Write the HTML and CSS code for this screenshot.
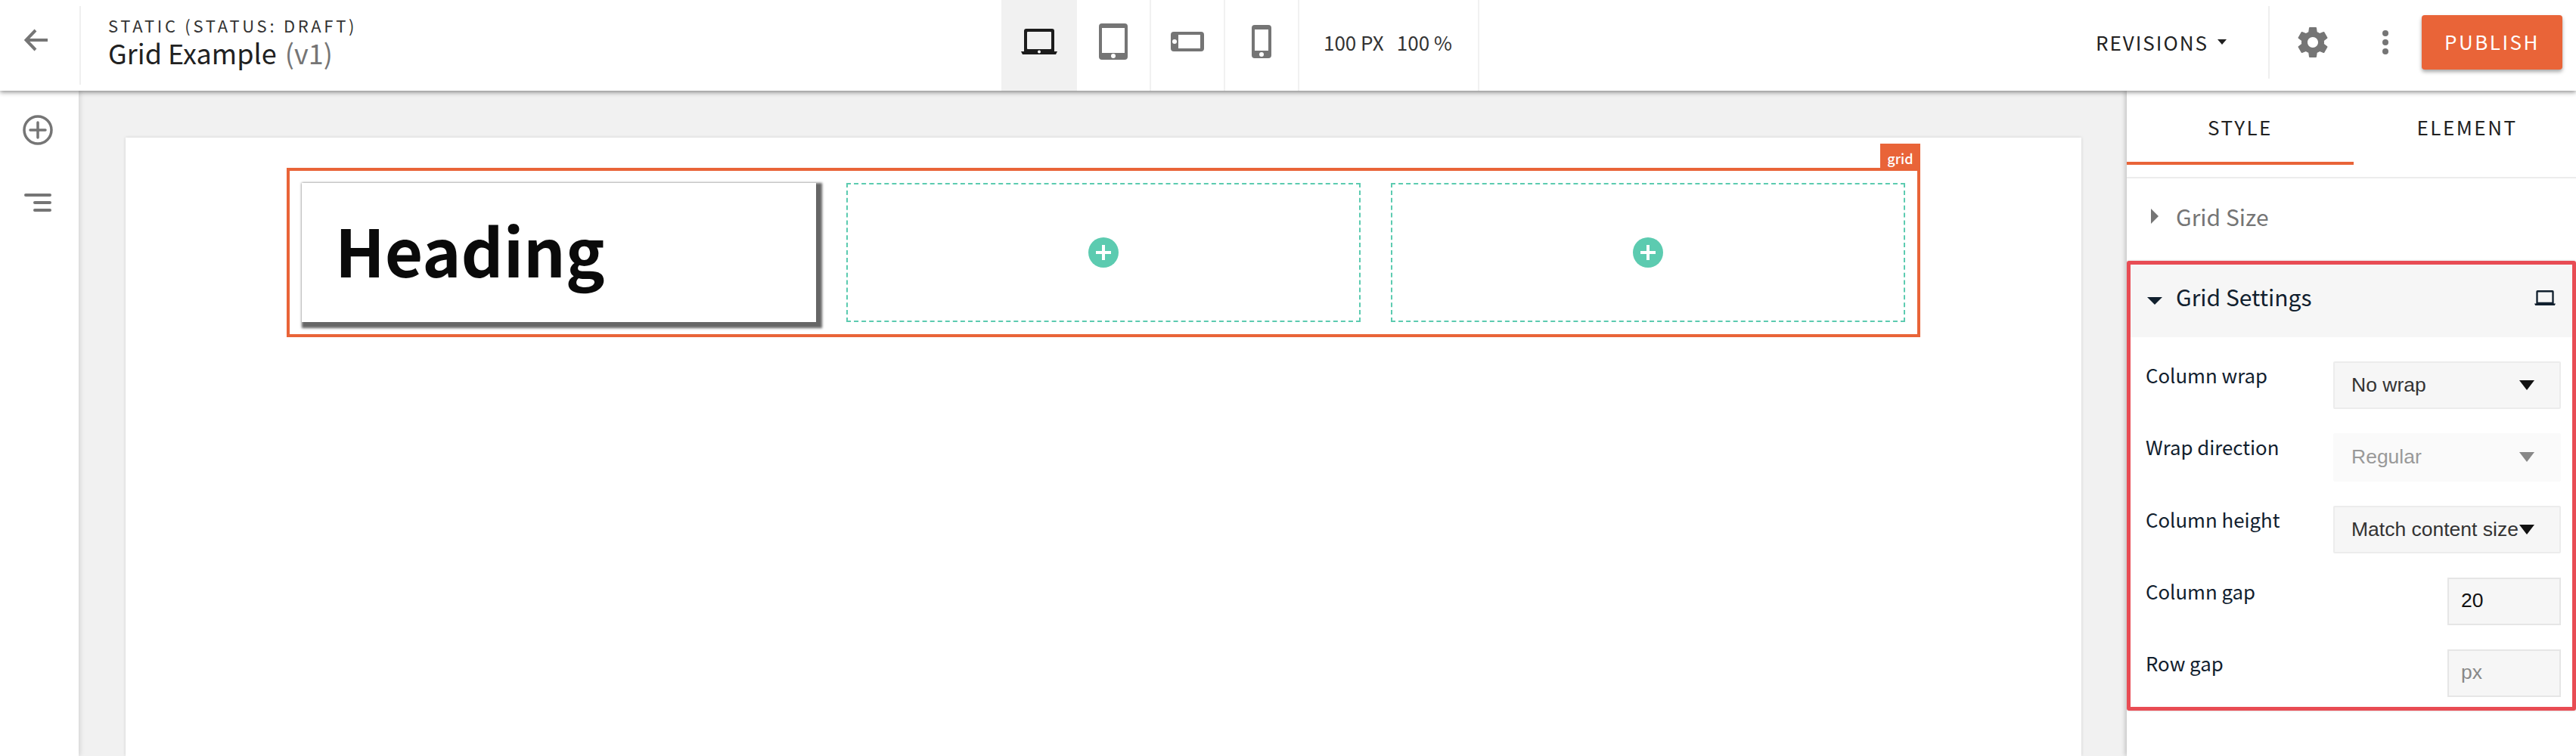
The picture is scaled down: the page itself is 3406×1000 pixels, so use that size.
FILE: index.html
```html
<!DOCTYPE html>
<html lang="en">
<head>
<meta charset="utf-8">
<title>Grid Example</title>
<link rel="stylesheet" href="styles.css">
</head>
<body>
<div class="app">
  <header class="topbar">
    <div class="back">
      <svg class="back-icon" viewBox="0 0 32 30"><path d="M31 15H3M15 2 2.500 15 15 28" fill="none" stroke="#757575" stroke-width="4"/></svg>
    </div>
    <div class="title-block">
      <div class="status">STATIC (STATUS: DRAFT)</div>
      <div class="title">Grid Example <span class="version">(v1)</span></div>
    </div>
    <div class="devices">
      <div class="device device-active">
        <svg width="48" height="34" viewBox="0 0 48 34"><path fill="#1c1c1c" fill-rule="evenodd" d="M7 0h34a3 3 0 0 1 3 3v27h4l-2 4H2l-2-4h4V3a3 3 0 0 1 3-3zm2 4a1 1 0 0 0-1 1v21a1 1 0 0 0 1 1h30a1 1 0 0 0 1-1V5a1 1 0 0 0-1-1z"/><circle cx="24" cy="30.500" r="2" fill="#fff"/></svg>
      </div>
      <div class="device">
        <svg width="38" height="48" viewBox="0 0 38 48"><path fill="#757575" fill-rule="evenodd" d="M4 0h30a4 4 0 0 1 4 4v40a4 4 0 0 1-4 4H4a4 4 0 0 1-4-4V4a4 4 0 0 1 4-4zm0 6v33h30V6z"/><circle cx="19" cy="43" r="3" fill="#fff"/></svg>
      </div>
      <div class="device">
        <svg width="44" height="26" viewBox="0 0 44 26"><path fill="#757575" fill-rule="evenodd" d="M4 0h36a4 4 0 0 1 4 4v18a4 4 0 0 1-4 4H4a4 4 0 0 1-4-4V4a4 4 0 0 1 4-4zm6 4v18h29V4z"/><circle cx="5" cy="13" r="3" fill="#fff"/></svg>
      </div>
      <div class="device">
        <svg width="26" height="44" viewBox="0 0 26 44"><path fill="#757575" fill-rule="evenodd" d="M4 0h18a4 4 0 0 1 4 4v36a4 4 0 0 1-4 4H4a4 4 0 0 1-4-4V4a4 4 0 0 1 4-4zm0 6v28h18V6z"/><circle cx="13" cy="39" r="3" fill="#fff"/></svg>
      </div>
      <div class="size-readout"><span>100 PX</span><span>100 %</span></div>
    </div>
    <div class="actions">
      <div class="revisions">REVISIONS<span class="caret-small"></span></div>
      <div class="divider"></div>
      <svg class="gear" width="48" height="48" viewBox="0 0 24 24"><path fill="#757575" d="M19.430 12.980c.040-.320.070-.640.070-.980s-.030-.660-.070-.980l2.110-1.650c.190-.150.240-.420.120-.640l-2-3.460c-.120-.220-.390-.300-.610-.220l-2.490 1c-.520-.400-1.080-.730-1.690-.980l-.380-2.650A.488.488 0 0 0 14 2h-4c-.250 0-.460.180-.490.420l-.380 2.650c-.610.250-1.170.590-1.690.980l-2.490-1c-.230-.090-.490 0-.610.220l-2 3.460c-.130.220-.070.490.120.640l2.110 1.650c-.040.320-.070.650-.070.980s.030.660.070.980l-2.110 1.650c-.190.150-.240.420-.120.640l2 3.460c.120.220.390.300.610.220l2.490-1c.520.400 1.080.730 1.690.980l.380 2.650c.030.240.240.420.490.420h4c.250 0 .460-.180.490-.420l.380-2.650c.610-.250 1.170-.590 1.690-.980l2.490 1c.230.090.490 0 .610-.220l2-3.460c.120-.220.070-.490-.120-.640l-2.110-1.650zM12 15.500c-1.930 0-3.500-1.570-3.500-3.500s1.570-3.500 3.500-3.500 3.500 1.570 3.500 3.500-1.570 3.500-3.500 3.500z"/></svg>
      <svg class="dots" width="8" height="32" viewBox="0 0 8 32"><circle cx="4" cy="4" r="4" fill="#757575"/><circle cx="4" cy="16" r="4" fill="#757575"/><circle cx="4" cy="28" r="4" fill="#757575"/></svg>
      <button class="publish">PUBLISH</button>
    </div>
  </header>

  <div class="workspace">
    <aside class="rail">
      <svg width="40" height="40" viewBox="0 0 40 40"><circle cx="20" cy="20" r="18" fill="none" stroke="#757575" stroke-width="3.500"/><path d="M20 10v20M10 20h20" stroke="#757575" stroke-width="3.500" stroke-linecap="round"/></svg>
      <svg width="36" height="24" viewBox="0 0 36 24"><path d="M2 2h32M14 12h20M14 22h20" stroke="#757575" stroke-width="4" stroke-linecap="round"/></svg>
    </aside>

    <main class="canvas">
      <div class="page">
        <div class="grid-block">
          <span class="grid-tag">grid</span>
          <div class="heading-card"><h1 class="heading">Heading</h1></div>
          <div class="slot"><span class="slot-add"><svg width="20" height="20" viewBox="0 0 20 20"><path d="M10 0v20M0 10h20" stroke="#fff" stroke-width="4"/></svg></span></div>
          <div class="slot"><span class="slot-add"><svg width="20" height="20" viewBox="0 0 20 20"><path d="M10 0v20M0 10h20" stroke="#fff" stroke-width="4"/></svg></span></div>
        </div>
      </div>
    </main>

    <aside class="panel">
      <div class="tabs">
        <div class="tab tab-active">STYLE</div>
        <div class="tab">ELEMENT</div>
      </div>
      <div class="section-closed"><span class="caret-right"></span>Grid Size</div>
      <section class="settings">
        <div class="settings-head">
          <span class="caret-down"></span>
          <span class="settings-title">Grid Settings</span>
          <svg class="settings-device" width="28" height="20" viewBox="0 0 48 34"><path fill="#11202e" fill-rule="evenodd" d="M7 0h34a3 3 0 0 1 3 3v27h4l-2 4H2l-2-4h4V3a3 3 0 0 1 3-3zm1 4v23h32V4z"/></svg>
        </div>
        <div class="settings-body">
          <div class="field">
            <label class="field-label">Column wrap</label>
            <div class="select"><span>No wrap</span><i class="select-arrow"></i></div>
          </div>
          <div class="field">
            <label class="field-label">Wrap direction</label>
            <div class="select select-disabled"><span>Regular</span><i class="select-arrow"></i></div>
          </div>
          <div class="field">
            <label class="field-label">Column height</label>
            <div class="select"><span>Match content size</span><i class="select-arrow"></i></div>
          </div>
          <div class="field">
            <label class="field-label">Column gap</label>
            <div class="num"><span>20</span></div>
          </div>
          <div class="field">
            <label class="field-label">Row gap</label>
            <div class="num num-empty"><span>px</span></div>
          </div>
        </div>
      </section>
    </aside>
  </div>
</div>
</body>
</html>
```

FILE: styles.css
```css
* { box-sizing: border-box; }
html, body { margin: 0; height: 100%; overflow: hidden; }
body { font-family: "Noto Sans CJK SC", "Noto Sans", sans-serif; color: #212121; background: #f1f1f1; }
.app { display: flex; flex-direction: column; height: 1000px; width: 3406px; }

.topbar { flex: 0 0 120px; display: flex; align-items: flex-start; background: #fff; box-shadow: 0 2px 6px rgba(0,0,0,.45); position: relative; z-index: 3; }
.back { width: 107px; height: 104px; margin-top: 8px; border-right: 2px solid #efefef; display: flex; align-items: center; padding: 0 0 14px 32px; }
.back-icon { width: 32px; height: 30px; }
.title-block { width: 1217px; padding: 21px 0 0 36px; }
.status { font-size: 22px; line-height: 24px; letter-spacing: 3.700px; color: #333; }
.title { font-size: 36px; line-height: 46px; margin-top: 1px; color: #212121; }
.version { color: #757575; margin-left: 3px; }

.devices { display: flex; height: 120px; }
.device { width: 98px; height: 120px; border-right: 2px solid #f1f1f1; display: flex; align-items: center; justify-content: center; padding-bottom: 10px; }
.device-active { width: 100px; background: #f1f1f1; border-right: 0; }
.size-readout { width: 238px; height: 120px; border-right: 2px solid #f1f1f1; display: flex; gap: 17px; align-items: center; padding: 0 0 10px 32px; font-size: 26px; color: #333; }

.actions { margin-left: auto; height: 120px; display: flex; align-items: center; }
.revisions { font-size: 26px; letter-spacing: 2px; color: #212121; display: flex; align-items: center; padding-bottom: 10px; }
.caret-small { width: 0; height: 0; margin-left: 12px; border: 6px solid transparent; border-top: 7px solid #212121; border-bottom: 0; }
.divider { width: 2px; height: 96px; background: #efefef; margin: 0 33px 8px 55px; }
.gear { margin-bottom: 8px; }
.dots { margin: 0 44px 8px 68px; }
.publish { width: 186px; height: 72px; margin: 0 18px 8px 0; padding: 0 0 4px; background: #e96438; color: #fff; border: 0; border-radius: 4px; font: 26px "Noto Sans CJK SC", sans-serif; letter-spacing: 2.500px; box-shadow: 0 3px 5px rgba(0,0,0,.35); }

.workspace { flex: 1; display: flex; min-height: 0; }
.rail { flex: 0 0 104px; background: #fff; box-shadow: 2px 0 6px rgba(0,0,0,.12); display: flex; flex-direction: column; align-items: center; padding: 32px 4px 0 0; gap: 64px; position: relative; z-index: 1; }
.canvas { flex: 1; padding: 62px 60px 0 62px; min-width: 0; }
.page { background: #fff; height: 100%; padding: 40px 213px 0 213px; box-shadow: 0 0 4px rgba(0,0,0,.14); }
.grid-block { position: relative; border: 4px solid #e96438; padding: 16px; display: grid; grid-template-columns: repeat(3, 680px); gap: 40px; height: 224px; }
.grid-tag { position: absolute; top: -36px; right: -4px; width: 53px; height: 36px; background: #e96438; color: #fff; font-size: 18px; font-weight: 500; line-height: 38px; text-align: center; }
.heading-card { background: #fff; height: 184px; box-shadow: 4px 4px 3px 4px #666; padding-left: 44px; display: flex; align-items: center; }
.heading { margin: 0 0 9px; font-size: 87px; font-weight: 700; line-height: 1; color: #0a0a0a; }
.slot { height: 184px; border: 2px dashed #5ccbb0; display: flex; align-items: center; justify-content: center; }
.slot-add { width: 40px; height: 40px; border-radius: 50%; background: #5ccbb0; display: flex; align-items: center; justify-content: center; }

.panel { flex: 0 0 594px; min-width: 0; overflow: hidden; background: #fff; box-shadow: -2px 0 6px rgba(0,0,0,.2); position: relative; z-index: 2; }
.tabs { display: flex; height: 116px; border-bottom: 2px solid #ececec; }
.tab { flex: 0 0 300px; height: 98px; padding-top: 32px; text-align: center; font-size: 26px; line-height: 32px; letter-spacing: 2.500px; color: #212121; }
.tab-active { border-bottom: 4px solid #e96438; }
.section-closed { height: 104px; padding: 0 0 4px 32px; display: flex; align-items: center; font-size: 30px; color: #757575; }
.caret-right { width: 0; height: 0; margin-right: 23px; border: 10px solid transparent; border-left: 10px solid #757575; border-right: 0; }
.settings { margin-top: 5px; height: 595px; border: 5px solid #e84c54; border-radius: 3px; box-shadow: 0 0 3px rgba(0,0,0,.2); }
.settings-head { height: 96px; background: #f6f6f6; display: flex; align-items: center; padding: 0 22px 0 22px; }
.caret-down { width: 0; height: 0; margin-right: 18px; border: 10px solid transparent; border-top: 10px solid #11202e; border-bottom: 0; }
.settings-title { font-size: 30px; line-height: 40px; color: #11202e; flex: 1; padding-bottom: 12px; }
.settings-device { margin-bottom: 8px; }
.settings-body { display: flex; flex-direction: column; gap: 32px; padding: 32px 15px 0 20px; }
.field { display: flex; justify-content: space-between; height: 63.300px; }
.field-label { font-size: 25.800px; line-height: 32px; padding-top: 2px; color: #11202e; }
.select { width: 301px; height: 100%; background: #f6f6f6; border: 2px solid #ececec; border-radius: 2px; display: flex; align-items: center; justify-content: space-between; padding: 0 33px 0 22px; font: 26.500px "Liberation Sans", Arial, sans-serif; color: #333; }
.select-arrow { width: 0; height: 0; border: 10px solid transparent; border-top: 13px solid #111; border-bottom: 0; flex: none; }
.select-disabled { background: #fafafa; border-color: #fafafa; color: #999; }
.select-disabled .select-arrow { border-top-color: #888; }
.num { width: 150px; height: 100%; background: #f6f6f6; border: 2px solid #e6e6e6; display: flex; align-items: center; padding: 0 0 3px 16px; font: 26.500px "Liberation Sans", Arial, sans-serif; color: #111; }
.num-empty { color: #888; }
```
